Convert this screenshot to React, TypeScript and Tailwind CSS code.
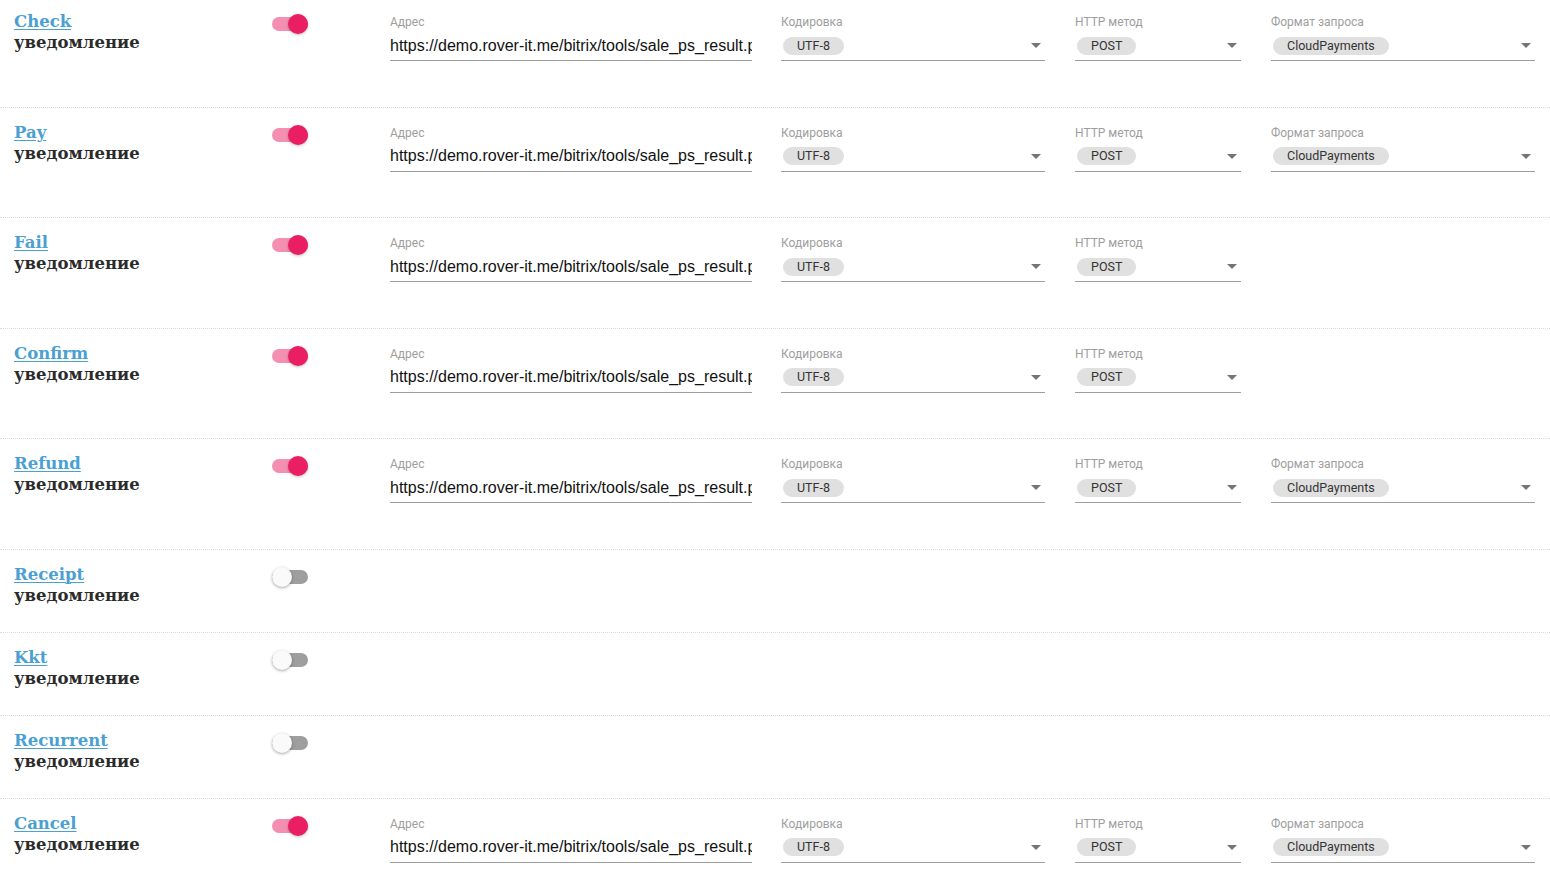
import React from "react";

type Row = { name: string; on: boolean; format?: boolean };

const rows: Row[] = [
  { name: "Check", on: true, format: true },
  { name: "Pay", on: true, format: true },
  { name: "Fail", on: true, format: false },
  { name: "Confirm", on: true, format: false },
  { name: "Refund", on: true, format: true },
  { name: "Receipt", on: false },
  { name: "Kkt", on: false },
  { name: "Recurrent", on: false },
  { name: "Cancel", on: true, format: true },
];

const URL = "https://demo.rover-it.me/bitrix/tools/sale_ps_result.php";

function Toggle({ on }: { on: boolean }) {
  return (
    <div className="relative w-[36px] h-[20px] mt-[3px]">
      <div
        className={
          "absolute left-0 top-[3px] w-[36px] h-[14px] rounded-full " +
          (on ? "bg-[#f48fb1]" : "bg-[#9e9e9e]")
        }
      />
      <div
        className={
          "absolute top-0 w-[20px] h-[20px] rounded-full " +
          (on
            ? "left-[16px] bg-[#e91e63] shadow-[0_1px_3px_rgba(0,0,0,0.25)]"
            : "left-0 bg-[#fafafa] shadow-[0_1px_3px_rgba(0,0,0,0.35)]")
        }
      />
    </div>
  );
}

function Label({ children }: { children: React.ReactNode }) {
  return (
    <div className="mt-[4px] h-[14px] text-[12px] leading-[14px] text-[#9e9e9e] font-['Roboto',sans-serif]">
      {children}
    </div>
  );
}

function Select({ label, value, width }: { label: string; value: string; width: string }) {
  return (
    <div className={width}>
      <Label>{label}</Label>
      <div className="h-[32px] pt-[2px] border-b border-[#9e9e9e] flex items-center justify-between pl-[2px] pr-[4px]">
        <span className="h-[18px] px-[14px] rounded-full bg-[#e0e0e0] text-[12.5px] leading-[18px] text-[#333] font-['Roboto',sans-serif]">
          {value}
        </span>
        <svg width="10" height="5" viewBox="0 0 10 5">
          <path d="M0 0 L10 0 L5 5 Z" fill="#757575" />
        </svg>
      </div>
    </div>
  );
}

function Fields({ format }: { format?: boolean }) {
  return (
    <div className="flex">
      <div className="w-[362px]">
        <Label>Адрес</Label>
        <div className="h-[32px] pt-[2px] border-b border-[#9e9e9e] flex items-center overflow-hidden">
          <span className="whitespace-nowrap text-[16px] text-[#111] font-['Liberation_Sans',Arial,sans-serif]">
            {URL}
          </span>
        </div>
      </div>
      <div className="ml-[29px]">
        <Select label="Кодировка" value="UTF-8" width="w-[264px]" />
      </div>
      <div className="ml-[30px]">
        <Select label="HTTP метод" value="POST" width="w-[166px]" />
      </div>
      {format && (
        <div className="ml-[30px]">
          <Select label="Формат запроса" value="CloudPayments" width="w-[264px]" />
        </div>
      )}
    </div>
  );
}

export default function App() {
  return (
    <div className="w-[1550px] min-h-[874px] bg-white overflow-hidden">
      <div className="-mt-[3px]">
        {rows.map((r, i) => (
          <div
            key={r.name}
            className={
              "flex items-start pt-[14px] " +
              (r.on ? "h-[110.5px] " : "h-[83px] ") +
              (i < rows.length - 1 ? "border-b border-dotted border-[#dcdcdc]" : "")
            }
          >
            <div className="w-[272px] shrink-0 pl-[14px] font-['DejaVu_Serif',serif] font-bold text-[16.5px] leading-[21px]">
              <a href="#" className="text-[#4aa0d2] underline underline-offset-[2px] decoration-1">
                {r.name}
              </a>
              <div className="text-[#2b2b2b]">уведомление</div>
            </div>
            <div className="w-[118px] shrink-0">
              <Toggle on={r.on} />
            </div>
            {r.on && <Fields format={r.format} />}
          </div>
        ))}
      </div>
    </div>
  );
}
